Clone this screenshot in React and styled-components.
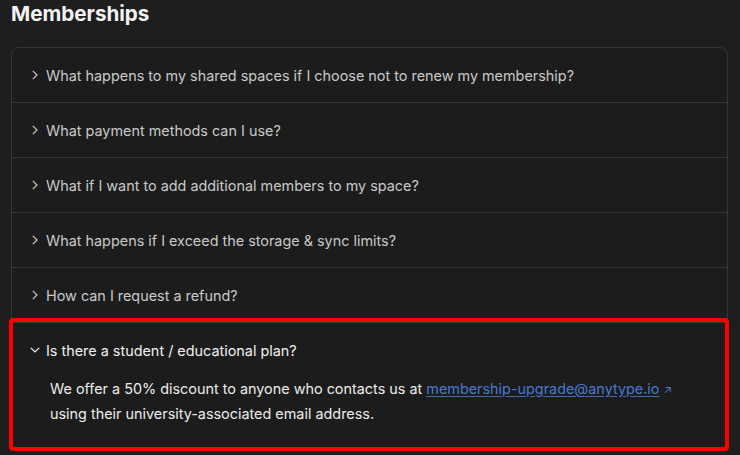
import React, { useState } from 'react';
import styled, { createGlobalStyle } from 'styled-components';

const GlobalStyle = createGlobalStyle`
  html, body {
    margin: 0;
    background: #1e1e1e;
  }
  body {
    font-family: Inter, "Noto Sans", sans-serif;
    color: #e8e8e8;
  }
`;

const Page = styled.div`
  width: 740px;
  height: 455px;
  overflow: hidden;
  padding: 0 12px 0 11px;
  box-sizing: border-box;
`;

const Title = styled.h2`
  margin: 0;
  padding-top: 1px;
  height: 47px;
  box-sizing: border-box;
  font-size: 20.6px;
  font-weight: 700;
  color: #f4f4f4;
`;

const Card = styled.div`
  border: 1px solid #363636;
  border-radius: 8px;
  background: #1c1c1c;
`;

const Item = styled.div`
  position: relative;
  border-top: ${(p) => (p.$first ? 'none' : '1px solid #363636')};
`;

const Question = styled.button`
  display: flex;
  align-items: center;
  gap: 6px;
  width: 100%;
  height: 54px;
  padding: 0 0 0 18px;
  border: none;
  background: none;
  font: inherit;
  font-size: 14.4px;
  color: ${(p) => (p.$open ? '#f0f0f0' : '#c9c9c9')};
  text-align: left;
  cursor: pointer;
`;

const Chevron = styled.svg`
  width: 10px;
  height: 10px;
  flex: none;
  transform: rotate(${(p) => (p.$open ? '90deg' : '0deg')});
`;

const Answer = styled.div`
  padding: 0 40px 22px 38px;
  font-size: 14.4px;
  line-height: 24px;
  color: #ececec;
`;

const MailLink = styled.a`
  color: #4a77d4;
  text-decoration: underline;
  text-decoration-color: #4a6aa8;
  text-underline-offset: 2px;
`;

const Arrow = styled.span`
  color: #4a77d4;
  font-size: 11px;
  margin-left: 4px;
`;

const Highlight = styled.div`
  position: absolute;
  left: -3px;
  right: -2px;
  top: -5px;
  bottom: -3px;
  border: 4px solid #ff0000;
  border-radius: 4px;
  pointer-events: none;
`;

const questions = [
  'What happens to my shared spaces if I choose not to renew my membership?',
  'What payment methods can I use?',
  'What if I want to add additional members to my space?',
  'What happens if I exceed the storage & sync limits?',
  'How can I request a refund?',
  'Is there a student / educational plan?',
];

export default function App() {
  const [open, setOpen] = useState(5);

  return (
    <>
      <GlobalStyle />
      <Page>
        <Title>Memberships</Title>
        <Card>
          {questions.map((q, i) => (
            <Item key={q} $first={i === 0}>
              <Question $open={open === i} onClick={() => setOpen(open === i ? -1 : i)}>
                <Chevron viewBox="0 0 10 10" $open={open === i}>
                  <path d="M2.8 0.8 L7 5 L2.8 9.2" fill="none" stroke="currentColor" strokeWidth="1.2" />
                </Chevron>
                {q}
              </Question>
              {open === i && (
                <>
                  <Answer>
                    We offer a 50% discount to anyone who contacts us at{' '}
                    <MailLink href="mailto:membership-upgrade@anytype.io">membership-upgrade@anytype.io</MailLink>
                    <Arrow>↗</Arrow>
                    <br />
                    using their university-associated email address.
                  </Answer>
                  <Highlight />
                </>
              )}
            </Item>
          ))}
        </Card>
      </Page>
    </>
  );
}
